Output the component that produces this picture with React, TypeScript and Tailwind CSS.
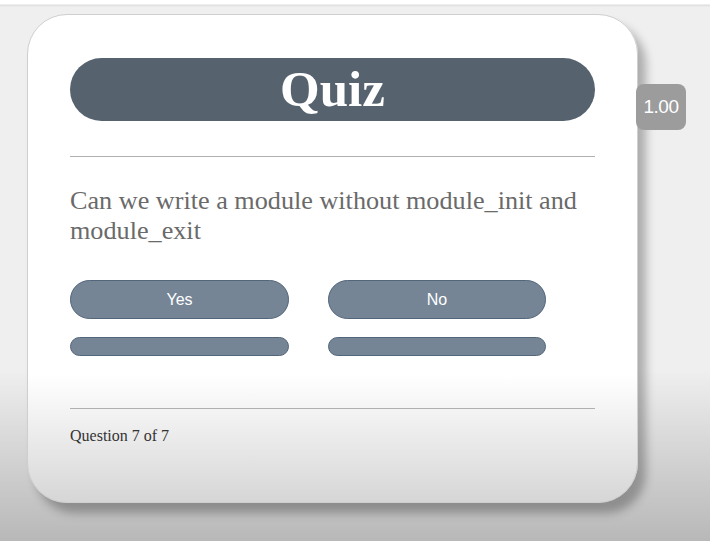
export default function App() {
  return (
    <div className="w-[710px] h-[541px] overflow-hidden relative bg-[linear-gradient(to_bottom,#ffffff_0px,#ffffff_4px,#dcdcdc_5px,#efefef_7px,#efefef_370px,#b8b8b8_541px)]">
      <div className="pt-[14px] pl-[27px]">
        <div className="w-[611px] h-[489px] rounded-[40px] border border-[#cfcfcf] bg-[linear-gradient(to_bottom,#ffffff_0%,#ffffff_74%,#d6d6d6_100%)] shadow-[8px_10px_10px_rgba(0,0,0,0.28)] px-[42px] pt-[43px] flex flex-col">
          <div className="h-[63px] rounded-full bg-[#56636e] flex items-center justify-center">
            <span className="text-white font-bold text-[51px] leading-none [font-family:'Liberation_Serif',serif]">Quiz</span>
          </div>
          <div className="mt-[35px] h-px bg-[#b0b0b0]" />
          <p className="mt-[29px] text-[26.2px] leading-[30px] text-[#6a6a6a] [font-family:'Liberation_Serif',serif]">
            Can we write a module without module_init and module_exit
          </p>
          <div className="mt-[34px] flex gap-[39px]">
            <button className="w-[219px] h-[39px] rounded-full bg-[#758596] border border-[#52657b] text-white text-[16px] [font-family:'Liberation_Sans',sans-serif]">Yes</button>
            <button className="w-[218px] h-[39px] rounded-full bg-[#758596] border border-[#52657b] text-white text-[16px] [font-family:'Liberation_Sans',sans-serif]">No</button>
          </div>
          <div className="mt-[18px] flex gap-[39px]">
            <div className="w-[219px] h-[19px] rounded-full bg-[#758596] border border-[#52657b]" />
            <div className="w-[218px] h-[19px] rounded-full bg-[#758596] border border-[#52657b]" />
          </div>
          <div className="mt-[52px] h-px bg-[#b0b0b0]" />
          <p className="mt-[17px] text-[16px] leading-[20px] text-[#333] [font-family:'Liberation_Serif',serif]">Question 7 of 7</p>
        </div>
      </div>
      <div className="absolute left-[636px] top-[84px] w-[50px] h-[46px] rounded-[8px] bg-[#9c9c9c] flex items-center justify-center text-white text-[19px] [font-family:'Liberation_Sans',sans-serif] tracking-[-0.5px]">1.00</div>
    </div>
  );
}
